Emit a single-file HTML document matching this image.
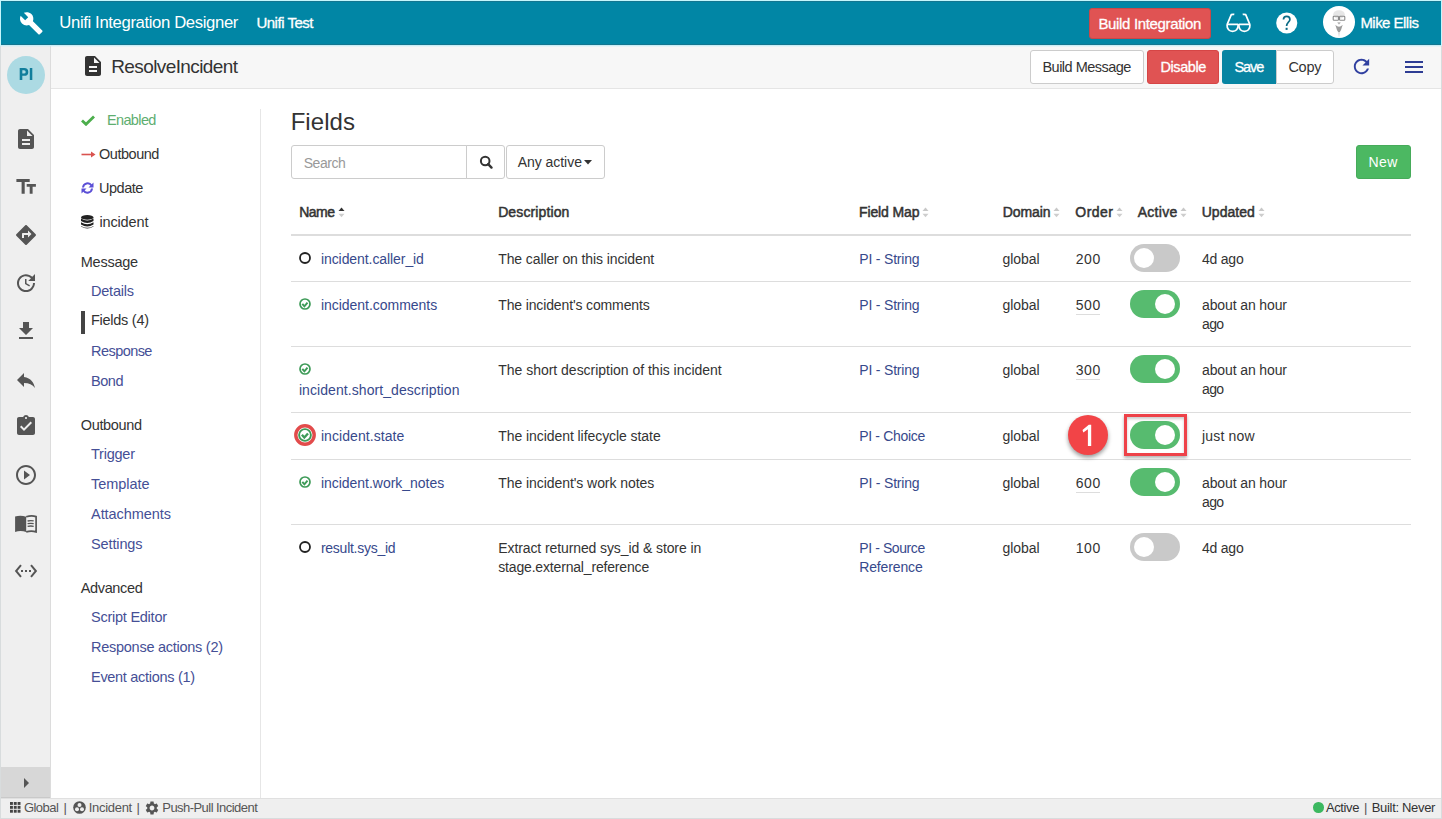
<!DOCTYPE html>
<html><head><meta charset="utf-8"><title>Unifi Integration Designer</title>
<style>*{box-sizing:border-box;margin:0;padding:0}
html,body{width:1442px;height:819px;overflow:hidden;background:#fff}
body{font-family:"Liberation Sans",sans-serif;color:#333;position:relative}
.abs{position:absolute}
.t{position:absolute;white-space:nowrap;line-height:1}
.btn{background:#fff;border:1px solid #ccc;border-radius:3px}
.tog{width:50px;height:28px;border-radius:14px;background:#c9c9c9}
.tog i{position:absolute;left:4px;top:4px;width:20px;height:20px;border-radius:50%;background:#fff}
.tog.on{background:#57bb6f}
.tog.on i{left:25px}
#frame{position:absolute;left:0;top:0;width:1442px;height:819px;border:1px solid #d8dcdd;pointer-events:none;z-index:50}
</style></head><body>
<div class="abs" style="left:1px;top:1px;width:1440px;height:44px;background:#0186a5;border-bottom:1px solid #137690"></div>
<div class="abs" style="left:1px;top:45px;width:50px;height:753px;background:#efefef;border-right:1px solid #dcdcdc"></div>
<div class="abs" style="left:51px;top:45px;width:1390px;height:44px;background:#f7f7f7;border-bottom:1px solid #e5e5e5"></div>
<div class="abs" style="left:260px;top:109px;width:1px;height:689px;background:#e6e6e6"></div>
<div class="abs" style="left:1px;top:798px;width:1440px;height:20px;background:#efefef;border-top:1px solid #e0e0e0"></div>
<div class="abs" style="left:1px;top:45px;width:1440px;height:1px;background:#c9eef6"></div>
<div class="abs" style="left:1px;top:46px;width:1440px;height:1px;background:rgba(200,235,245,.35)"></div>
<svg class="abs" style="left:18.6px;top:10.7px;" width="24.6" height="24.6" viewBox="0 0 24 24"><path fill="#fff" d="M22.7 19l-9.1-9.1c.9-2.3.4-5-1.5-6.9-2-2-5-2.4-7.4-1.3L9 6 6 9 1.6 4.7C.4 7.1.9 10.1 2.9 12.1c1.9 1.9 4.6 2.4 6.9 1.5l9.1 9.1c.4.4 1 .4 1.4 0l2.3-2.3c.5-.4.5-1.1.1-1.4z"/></svg>
<svg class="abs" style="left:1225px;top:13px" width="27" height="21" viewBox="0 0 27 21"><g fill="none" stroke="#fff" stroke-width="1.7" stroke-linejoin="round"><path d="M2 11.3 H13.2 M13.8 11.3 H25"/><path d="M2 11.3 C1.8 16.5 4.5 18.3 7.6 18.3 C10.8 18.3 13.3 16.5 13.2 11.3"/><path d="M13.8 11.3 C13.7 16.5 16.2 18.3 19.4 18.3 C22.5 18.3 25.2 16.5 25 11.3"/><path d="M2.2 11.3 L6.3 1.6 Q7.5 1.1 9.3 1.4"/><path d="M24.8 11.3 L20.7 1.6 Q19.5 1.1 17.7 1.4"/></g></svg>
<svg class="abs" style="left:1272px;top:8px" width="30" height="30" viewBox="0 0 30 30"><circle cx="14.75" cy="15.05" r="10.55" fill="#fff"/><path d="M11.5 11.6 C11.5 9.4 12.9 8.4 14.7 8.4 C16.6 8.4 17.9 9.6 17.9 11.4 C17.9 13.9 14.7 14.3 14.6 18" fill="none" stroke="#0a6a85" stroke-width="1.7"/><rect x="13.6" y="19.8" width="2" height="2.1" fill="#0a6a85"/></svg>
<div class="abs" style="left:1323px;top:6px;width:32px;height:32px;border-radius:50%;background:#fff;overflow:hidden"><svg width="32" height="32" viewBox="0 0 32 32"><ellipse cx="16" cy="8.5" rx="5.8" ry="4.2" fill="#e6e6e6"/><g fill="none" stroke="#8a8a8a" stroke-width="1.1"><rect x="10.2" y="10.3" width="5.3" height="3.9" rx="0.8"/><rect x="16.5" y="10.3" width="5.3" height="3.9" rx="0.8"/></g><path d="M14.3 16.3 H17.7 L16.6 18.2 H15.4z" fill="#b5b5b5"/><path d="M12.3 18.8 Q16 22.5 19.7 18.8 Q18.5 24 16 27.5 Q13.5 24 12.3 18.8z" fill="#9c9c9c"/><path d="M14.8 26 L17.2 26 L16 32z" fill="#e2e2e2"/></svg></div>
<svg class="abs" style="left:81px;top:54px;" width="24" height="24" viewBox="0 0 24 24"><path fill="#333" d="M14 2H6c-1.1 0-1.99.9-1.99 2L4 20c0 1.1.89 2 1.99 2H18c1.1 0 2-.9 2-2V8l-6-6zm2 16H8v-2h8v2zm0-4H8v-2h8v2zm-3-5V3.5L18.5 9H13z"/></svg>
<svg class="abs" style="left:1350.2px;top:54.8px;" width="23" height="23" viewBox="0 0 24 24"><path fill="#3040a0" d="M17.65 6.35C16.2 4.9 14.21 4 12 4c-4.42 0-7.99 3.58-7.99 8s3.57 8 7.99 8c3.73 0 6.84-2.55 7.73-6h-2.08c-.82 2.33-3.04 4-5.65 4-3.31 0-6-2.69-6-6s2.69-6 6-6c1.66 0 3.14.69 4.22 1.78L13 11h7V4l-2.35 2.35z"/></svg>
<div class="abs" style="left:1405px;top:61px;width:18px;height:2.2px;background:#2e3d94"></div><div class="abs" style="left:1405px;top:66px;width:18px;height:2.2px;background:#2e3d94"></div><div class="abs" style="left:1405px;top:71px;width:18px;height:2.2px;background:#2e3d94"></div>
<div class="abs btn" style="left:1030px;top:50px;width:114px;height:34px"></div>
<div class="abs" style="left:1147px;top:50px;width:72px;height:34px;background:#e05353;border-radius:3px;border:1px solid #d64545"></div>
<div class="abs" style="left:1222px;top:50px;width:54px;height:34px;background:#0784a2;border-radius:3px 0 0 3px"></div>
<div class="abs btn" style="left:1275.5px;top:50px;width:58.5px;height:34px;border-radius:0 3px 3px 0"></div>
<div class="abs" style="left:1089px;top:8px;width:122px;height:31px;background:#e05353;border-radius:3px;border:1px solid #c94848"></div>
<div class="abs" style="left:7px;top:55.5px;width:38px;height:38px;border-radius:50%;background:#acdae3"></div>
<svg class="abs" style="left:2px;top:50px" width="50" height="50" viewBox="0 0 50 50"><g fill="#127e9c"><path d="M17.7 18 H22.2 Q26.3 18 26.3 21.9 Q26.3 25.8 22.2 25.8 H20.3 V30 H17.7z M20.3 20.2 V23.6 H22 Q23.7 23.6 23.7 21.9 Q23.7 20.2 22 20.2z"/><rect x="27.8" y="18" width="2.5" height="12"/></g></svg>
<svg class="abs" style="left:12px;top:172px" width="30" height="28" viewBox="0 0 30 28"><path fill="#555" d="M4.4 7H17.7V9.9H12.7V21.8H9.6V9.9H4.4z M14.7 12H23.9V14.7H20.6V21.8H17.7V14.7H14.7z"/></svg>
<svg class="abs" style="left:14px;top:126.69999999999999px;" width="24" height="24" viewBox="0 0 24 24"><path fill="#555" d="M14 2H6c-1.1 0-1.99.9-1.99 2L4 20c0 1.1.89 2 1.99 2H18c1.1 0 2-.9 2-2V8l-6-6zm2 16H8v-2h8v2zm0-4H8v-2h8v2zm-3-5V3.5L18.5 9H13z"/></svg>
<svg class="abs" style="left:14px;top:223px;" width="24" height="24" viewBox="0 0 24 24"><path fill="#555" d="M21.71 11.29l-9-9c-.39-.39-1.02-.39-1.41 0l-9 9c-.39.39-.39 1.02 0 1.41l9 9c.39.39 1.02.39 1.41 0l9-9c.39-.38.39-1.01 0-1.41zM14 14.5V12h-4v3H8v-4c0-.55.45-1 1-1h5V7.5l3.5 3.5-3.5 3.5z"/></svg>
<svg class="abs" style="left:14px;top:270.6px;" width="24" height="24" viewBox="0 0 24 24"><path fill="#555" d="M21 10.12h-6.78l2.74-2.82c-2.73-2.7-7.150-2.8-9.880-.1-2.73 2.71-2.73 7.08 0 9.79s7.15 2.71 9.88 0C18.32 15.65 19 14.08 19 12.1h2c0 1.98-.88 4.55-2.64 6.29-3.51 3.48-9.21 3.48-12.72 0-3.5-3.47-3.53-9.11-.02-12.58s9.14-3.47 12.65 0L21 3v7.12zM12.5 8v4.25l3.5 2.08-.72 1.21L11 13V8h1.5z"/></svg>
<svg class="abs" style="left:14px;top:319px;" width="24" height="24" viewBox="0 0 24 24"><path fill="#555" d="M19 9h-4V3H9v6H5l7 7 7-7zM5 18v2h14v-2H5z"/></svg>
<svg class="abs" style="left:14px;top:367.5px;" width="24" height="24" viewBox="0 0 24 24"><path fill="#555" d="M10 9V5l-7 7 7 7v-4.1c5 0 8.5 1.6 11 5.1-1-5-4-10-11-11z"/></svg>
<svg class="abs" style="left:14px;top:414px;" width="24" height="24" viewBox="0 0 24 24"><path fill="#555" d="M19 3h-4.18C14.4 1.84 13.3 1 12 1c-1.3 0-2.4.84-2.82 2H5c-1.1 0-2 .9-2 2v14c0 1.1.9 2 2 2h14c1.1 0 2-.9 2-2V5c0-1.1-.9-2-2-2zm-7 0c.55 0 1 .45 1 1s-.45 1-1 1-1-.45-1-1 .45-1 1-1zm-2 14l-4-4 1.41-1.41L10 14.17l6.59-6.59L18 9l-8 8z"/></svg>
<svg class="abs" style="left:14px;top:463px;" width="24" height="24" viewBox="0 0 24 24"><path fill="#555" d="M10 16.5l6-4.5-6-4.5v9zM12 2C6.48 2 2 6.480 2 12s4.48 10 10 10 10-4.48 10-10S17.52 2 12 2zm0 18c-4.41 0-8-3.59-8-8s3.59-8 8-8 8 3.59 8 8-3.59 8-8 8z"/></svg>
<svg class="abs" style="left:14px;top:558.5px;" width="24" height="24" viewBox="0 0 24 24"><path fill="#555" d="M7.77 6.76L6.23 5.48.82 12l5.41 6.52 1.54-1.28L3.42 12l4.35-5.24zM7 13h2v-2H7v2zm10-2h-2v2h2v-2zm-6 2h2v-2h-2v2zm6.77-7.52l-1.54 1.28L20.58 12l-4.35 5.24 1.54 1.28L23.18 12l-5.41-6.52z"/></svg>
<svg class="abs" style="left:10px;top:505px" width="32" height="40" viewBox="0 0 32 40"><path fill="#555" d="M5.1 11.6 Q10.5 10 16.2 11.8 V26.9 Q10.5 25.2 5.1 26.9z"/><g fill="none" stroke="#555"><path stroke-width="1.7" d="M16.2 11.8 Q21.5 10 26.1 11.6 V26.9 Q21.5 25.2 16.2 26.9"/><path stroke-width="1.3" d="M17.6 16 Q20.5 15.3 23.7 15.9 M17.6 18.7 Q20.5 18 23.7 18.6 M17.6 21.4 Q20.5 20.7 23.7 21.3"/></g></svg>
<div class="abs" style="left:1px;top:767px;width:49px;height:31px;background:#d7d7d7;border-bottom:1px solid #c9c9c9"></div>
<svg class="abs" style="left:14px;top:770.5px;" width="24" height="24" viewBox="0 0 24 24"><path fill="#555" d="M10 17l5-5-5-5v10z"/></svg>
<svg class="abs" style="left:81px;top:115px" width="14" height="11" viewBox="0 0 14 11"><path d="M1 5.5 L5 9.3 L13 1.5" fill="none" stroke="#4cae4c" stroke-width="2.8"/></svg>
<svg class="abs" style="left:80.5px;top:150px" width="15" height="9" viewBox="0 0 15 9"><path d="M0.5 4.5 H11" stroke="#d9534f" stroke-width="1.6"/><path d="M10 1.5 L14.5 4.5 L10 7.5z" fill="#d9534f"/></svg>
<svg class="abs" style="left:80.5px;top:182px" width="13" height="12" viewBox="0 0 13 12"><g fill="none" stroke="#5b4fd6" stroke-width="2"><path d="M2 5.5 A4.6 4.6 0 0 1 10.5 3.5"/><path d="M11 6.5 A4.6 4.6 0 0 1 2.5 8.5"/></g><path d="M12.5 0.5 V5.5 H7.5z" fill="#5b4fd6"/><path d="M0.5 11.5 V6.5 H5.5z" fill="#5b4fd6"/></svg>
<svg class="abs" style="left:81px;top:215px" width="12.5" height="14" viewBox="0 0 12.5 14"><g fill="#222"><ellipse cx="6.25" cy="2.4" rx="6.2" ry="2.3"/><path d="M0 3.6 Q6.25 7.5 12.5 3.6 V6 Q6.25 9.8 0 6z"/><path d="M0 7.3 Q6.25 11.2 12.5 7.3 V9.6 Q6.25 13.4 0 9.6z"/><path d="M0 10.9 Q6.25 14.8 12.5 10.9 V11.6 Q6.25 15.5 0 11.6z"/></g></svg>
<div class="abs" style="left:81px;top:310.5px;width:3.5px;height:23px;background:#444"></div>
<div class="abs" style="left:291px;top:145px;width:176px;height:34px;border:1px solid #ccc;border-radius:3px 0 0 3px"></div>
<div class="abs" style="left:466px;top:145px;width:39px;height:34px;border:1px solid #ccc;border-radius:0 3px 3px 0"></div>
<svg class="abs" style="left:478.5px;top:155px" width="14" height="15" viewBox="0 0 14 15"><circle cx="6.2" cy="6" r="4.3" fill="none" stroke="#333" stroke-width="2"/><path d="M9.2 9.1 L12.5 12.6" stroke="#333" stroke-width="2.4" stroke-linecap="round"/></svg>
<div class="abs" style="left:505.5px;top:145px;width:99.5px;height:34px;border:1px solid #ccc;border-radius:3px"></div>
<svg class="abs" style="left:584px;top:160px" width="8" height="5" viewBox="0 0 8 5"><path d="M0 0 H8 L4 4.5z" fill="#333"/></svg>
<div class="abs" style="left:1356px;top:145px;width:55px;height:34px;background:#4cb862;border-radius:3px;border:1px solid #46ab5a"></div>
<div class="abs" style="left:291px;top:234px;width:1120px;height:2px;background:#ddd"></div>
<svg class="abs" style="left:337.5px;top:206px" width="7" height="12" viewBox="0 0 7 12"><path d="M0.5 5 L3.5 1.5 L6.5 5z" fill="#333"/><path d="M0.5 7.8 L3.5 11.3 L6.5 7.8z" fill="#cdcdcd"/></svg>
<svg class="abs" style="left:922px;top:206px" width="7" height="12" viewBox="0 0 7 12"><path d="M0.5 5 L3.5 1.5 L6.5 5z" fill="#c8c8c8"/><path d="M0.5 7.8 L3.5 11.3 L6.5 7.8z" fill="#cdcdcd"/></svg>
<svg class="abs" style="left:1053px;top:206px" width="7" height="12" viewBox="0 0 7 12"><path d="M0.5 5 L3.5 1.5 L6.5 5z" fill="#c8c8c8"/><path d="M0.5 7.8 L3.5 11.3 L6.5 7.8z" fill="#cdcdcd"/></svg>
<svg class="abs" style="left:1115.5px;top:206px" width="7" height="12" viewBox="0 0 7 12"><path d="M0.5 5 L3.5 1.5 L6.5 5z" fill="#c8c8c8"/><path d="M0.5 7.8 L3.5 11.3 L6.5 7.8z" fill="#cdcdcd"/></svg>
<svg class="abs" style="left:1179.5px;top:206px" width="7" height="12" viewBox="0 0 7 12"><path d="M0.5 5 L3.5 1.5 L6.5 5z" fill="#c8c8c8"/><path d="M0.5 7.8 L3.5 11.3 L6.5 7.8z" fill="#cdcdcd"/></svg>
<svg class="abs" style="left:1257.5px;top:206px" width="7" height="12" viewBox="0 0 7 12"><path d="M0.5 5 L3.5 1.5 L6.5 5z" fill="#c8c8c8"/><path d="M0.5 7.8 L3.5 11.3 L6.5 7.8z" fill="#cdcdcd"/></svg>
<svg class="abs" style="left:9.5px;top:802px" width="12" height="12" viewBox="0 0 12 12"><g fill="#444"><rect x="0.0" y="0.0" width="2.9" height="2.9"/><rect x="0.0" y="3.9" width="2.9" height="2.9"/><rect x="0.0" y="7.8" width="2.9" height="2.9"/><rect x="3.8" y="0.0" width="2.9" height="2.9"/><rect x="3.8" y="3.9" width="2.9" height="2.9"/><rect x="3.8" y="7.8" width="2.9" height="2.9"/><rect x="7.6" y="0.0" width="2.9" height="2.9"/><rect x="7.6" y="3.9" width="2.9" height="2.9"/><rect x="7.6" y="7.8" width="2.9" height="2.9"/></g></svg>
<svg class="abs" style="left:72.5px;top:800.5px" width="13" height="13" viewBox="0 0 13 13"><circle cx="6.5" cy="6.5" r="6.3" fill="#555"/><circle cx="6.5" cy="4" r="2" fill="#efefef"/><circle cx="4" cy="8.3" r="2" fill="#efefef"/><circle cx="9" cy="8.3" r="2" fill="#efefef"/></svg>
<svg class="abs" style="left:144.3px;top:799.5px" width="16" height="16" viewBox="0 0 24 24"><path fill="#555" d="M19.14 12.94c.04-.3.06-.61.06-.94 0-.32-.02-.64-.07-.94l2.03-1.58c.18-.14.23-.41.12-.61l-1.92-3.32c-.12-.22-.37-.29-.59-.22l-2.39.96c-.5-.38-1.03-.7-1.62-.94l-.36-2.54c-.04-.24-.24-.41-.48-.41h-3.84c-.24 0-.43.17-.47.41l-.36 2.54c-.59.24-1.13.57-1.62.94l-2.39-.96c-.22-.08-.47 0-.59.22L2.74 8.87c-.12.21-.08.47.12.61l2.03 1.58c-.05.3-.09.63-.09.94s.02.64.07.94l-2.030 1.58c-.18.14-.23.41-.12.61l1.92 3.32c.12.22.37.29.59.22l2.39-.96c.5.38 1.03.7 1.62.94l.36 2.54c.05.24.24.41.48.41h3.84c.24 0 .44-.17.47-.41l.36-2.54c.59-.24 1.13-.56 1.62-.94l2.39.96c.22.08.47 0 .59-.22l1.92-3.32c.12-.22.07-.47-.12-.61l-2.01-1.58zM12 15.6c-1.98 0-3.6-1.62-3.6-3.6s1.62-3.6 3.6-3.6 3.6 1.62 3.6 3.6-1.62 3.6-3.6 3.6z"/></svg>
<div class="abs" style="left:1313px;top:802px;width:10.5px;height:10.5px;border-radius:50%;background:#3cb860"></div>

<div class="t" style="left:59.33px;top:15.16px;font-size:16.7px;color:#fff;letter-spacing:-0.371px;">Unifi Integration Designer</div>
<div class="t" style="left:256.40px;top:15.30px;font-size:15px;color:#fff;letter-spacing:-0.485px;-webkit-text-stroke:0.3px #fff;">Unifi Test</div>
<div class="t" style="left:1098.40px;top:15.80px;font-size:15px;color:#fff;letter-spacing:-0.335px;-webkit-text-stroke:0.3px #fff;">Build Integration</div>
<div class="t" style="left:1360.40px;top:14.80px;font-size:15px;color:#fff;letter-spacing:-0.532px;-webkit-text-stroke:0.3px #fff;">Mike Ellis</div>
<div class="t" style="left:111.24px;top:57.11px;font-size:19px;color:#333;letter-spacing:-0.604px;">ResolveIncident</div>
<div class="t" style="left:1042.42px;top:60.22px;font-size:14.5px;color:#333;letter-spacing:-0.508px;">Build Message</div>
<div class="t" style="left:1160.42px;top:60.22px;font-size:14.5px;color:#fff;letter-spacing:-0.391px;-webkit-text-stroke:0.3px #fff;">Disable</div>
<div class="t" style="left:1234.42px;top:60.22px;font-size:14.5px;color:#fff;letter-spacing:-1.012px;-webkit-text-stroke:0.3px #fff;">Save</div>
<div class="t" style="left:1288.42px;top:60.22px;font-size:14.5px;color:#333;letter-spacing:-0.279px;">Copy</div>
<div class="t" style="left:106.92px;top:112.52px;font-size:14.5px;color:#5eae70;letter-spacing:-0.617px;">Enabled</div>
<div class="t" style="left:99.02px;top:146.72px;font-size:14.5px;color:#333;letter-spacing:-0.468px;">Outbound</div>
<div class="t" style="left:99.02px;top:180.72px;font-size:14.5px;color:#333;letter-spacing:-0.469px;">Update</div>
<div class="t" style="left:99.42px;top:214.72px;font-size:14.5px;color:#333;letter-spacing:-0.138px;">incident</div>
<div class="t" style="left:80.72px;top:254.72px;font-size:14.5px;color:#333;letter-spacing:-0.237px;">Message</div>
<div class="t" style="left:91.02px;top:283.72px;font-size:14.5px;color:#454f96;letter-spacing:-0.218px;">Details</div>
<div class="t" style="left:91.02px;top:313.22px;font-size:14.5px;color:#333;letter-spacing:-0.268px;">Fields (4)</div>
<div class="t" style="left:91.02px;top:343.72px;font-size:14.5px;color:#454f96;letter-spacing:-0.554px;">Response</div>
<div class="t" style="left:91.02px;top:373.72px;font-size:14.5px;color:#454f96;letter-spacing:-0.450px;">Bond</div>
<div class="t" style="left:80.72px;top:417.72px;font-size:14.5px;color:#333;letter-spacing:-0.326px;">Outbound</div>
<div class="t" style="left:91.02px;top:447.22px;font-size:14.5px;color:#454f96;letter-spacing:-0.230px;">Trigger</div>
<div class="t" style="left:91.02px;top:477.22px;font-size:14.5px;color:#454f96;letter-spacing:-0.046px;">Template</div>
<div class="t" style="left:91.02px;top:506.72px;font-size:14.5px;color:#454f96;letter-spacing:-0.058px;">Attachments</div>
<div class="t" style="left:91.02px;top:536.72px;font-size:14.5px;color:#454f96;letter-spacing:-0.126px;">Settings</div>
<div class="t" style="left:80.72px;top:580.72px;font-size:14.5px;color:#333;letter-spacing:-0.354px;">Advanced</div>
<div class="t" style="left:91.02px;top:610.22px;font-size:14.5px;color:#454f96;letter-spacing:-0.247px;">Script Editor</div>
<div class="t" style="left:91.02px;top:639.72px;font-size:14.5px;color:#454f96;letter-spacing:-0.263px;">Response actions (2)</div>
<div class="t" style="left:91.02px;top:669.72px;font-size:14.5px;color:#454f96;letter-spacing:-0.299px;">Event actions (1)</div>
<div class="t" style="left:290.64px;top:109.68px;font-size:24px;color:#333;letter-spacing:0.072px;">Fields</div>
<div class="t" style="left:303.64px;top:156.15px;font-size:14px;color:#999;letter-spacing:-0.416px;">Search</div>
<div class="t" style="left:517.74px;top:154.85px;font-size:14px;color:#333;letter-spacing:-0.045px;">Any active</div>
<div class="t" style="left:1368.44px;top:155.15px;font-size:14px;color:#fff;letter-spacing:0.486px;">New</div>
<div class="t" style="left:299.14px;top:205.15px;font-size:14px;color:#333;letter-spacing:-0.489px;-webkit-text-stroke:0.5px #333;">Name</div>
<div class="t" style="left:498.14px;top:205.15px;font-size:14px;color:#333;letter-spacing:0.125px;-webkit-text-stroke:0.5px #333;">Description</div>
<div class="t" style="left:858.94px;top:205.15px;font-size:14px;color:#333;letter-spacing:-0.111px;-webkit-text-stroke:0.5px #333;">Field Map</div>
<div class="t" style="left:1002.64px;top:205.15px;font-size:14px;color:#333;letter-spacing:-0.053px;-webkit-text-stroke:0.5px #333;">Domain</div>
<div class="t" style="left:1075.34px;top:205.15px;font-size:14px;color:#333;letter-spacing:0.448px;-webkit-text-stroke:0.5px #333;">Order</div>
<div class="t" style="left:1137.64px;top:205.15px;font-size:14px;color:#333;letter-spacing:0.291px;-webkit-text-stroke:0.5px #333;">Active</div>
<div class="t" style="left:1201.64px;top:205.15px;font-size:14px;color:#333;letter-spacing:0.058px;-webkit-text-stroke:0.5px #333;">Updated</div>
<div class="t" style="left:320.94px;top:252.15px;font-size:14px;color:#37498c;letter-spacing:-0.077px;">incident.caller_id</div>
<div class="t" style="left:498.24px;top:252.15px;font-size:14px;color:#333;letter-spacing:-0.107px;">The caller on this incident</div>
<div class="t" style="left:859.24px;top:252.15px;font-size:14px;color:#37498c;letter-spacing:-0.186px;">PI - String</div>
<div class="t" style="left:1002.44px;top:252.15px;font-size:14px;color:#333;letter-spacing:-0.017px;">global</div>
<div class="t" style="left:1075.64px;top:252.15px;font-size:14px;color:#333;letter-spacing:0.610px;">200</div>
<div class="t" style="left:1202.04px;top:252.15px;font-size:14px;color:#333;letter-spacing:-0.228px;">4d ago</div>
<div class="abs tog" style="left:1130px;top:244px"><i></i></div>
<div class="abs" style="left:291px;top:281.0px;width:1120px;height:1px;background:#ddd"></div>
<svg class="abs" style="left:299px;top:251.8px" width="12" height="12" viewBox="0 0 12 12"><circle cx="6" cy="6" r="5" fill="none" stroke="#222" stroke-width="1.8"/></svg>
<div class="t" style="left:320.94px;top:298.15px;font-size:14px;color:#37498c;letter-spacing:-0.027px;">incident.comments</div>
<div class="t" style="left:498.24px;top:298.15px;font-size:14px;color:#333;letter-spacing:-0.133px;">The incident's comments</div>
<div class="t" style="left:859.24px;top:298.15px;font-size:14px;color:#37498c;letter-spacing:-0.186px;">PI - String</div>
<div class="t" style="left:1002.44px;top:298.15px;font-size:14px;color:#333;letter-spacing:-0.017px;">global</div>
<div class="t" style="left:1075.64px;top:298.15px;font-size:14px;color:#333;letter-spacing:0.610px;">500</div>
<div class="abs" style="left:1076px;top:314px;width:24px;height:1px;background:#ddd"></div>
<div class="t" style="left:1202.04px;top:298.15px;font-size:14px;color:#333;letter-spacing:-0.119px;">about an hour</div>
<div class="t" style="left:1202.04px;top:317.15px;font-size:14px;color:#333;letter-spacing:-0.690px;">ago</div>
<div class="abs tog on" style="left:1130px;top:290px"><i></i></div>
<div class="abs" style="left:291px;top:346.0px;width:1120px;height:1px;background:#ddd"></div>
<svg class="abs" style="left:299px;top:297.8px" width="12" height="12" viewBox="0 0 12 12"><circle cx="6" cy="6" r="5" fill="none" stroke="#3e9b58" stroke-width="1.7"/><path d="M3.3 5.9 L5.4 8.3 L8.5 4.7" fill="none" stroke="#3e9b58" stroke-width="2"/></svg>
<div class="t" style="left:298.94px;top:383.15px;font-size:14px;color:#37498c;letter-spacing:0.069px;">incident.short_description</div>
<div class="t" style="left:498.24px;top:363.15px;font-size:14px;color:#333;letter-spacing:-0.017px;">The short description of this incident</div>
<div class="t" style="left:859.24px;top:363.15px;font-size:14px;color:#37498c;letter-spacing:-0.186px;">PI - String</div>
<div class="t" style="left:1002.44px;top:363.15px;font-size:14px;color:#333;letter-spacing:-0.017px;">global</div>
<div class="t" style="left:1075.64px;top:363.15px;font-size:14px;color:#333;letter-spacing:0.610px;">300</div>
<div class="abs" style="left:1076px;top:379px;width:24px;height:1px;background:#ddd"></div>
<div class="t" style="left:1202.04px;top:363.15px;font-size:14px;color:#333;letter-spacing:-0.119px;">about an hour</div>
<div class="t" style="left:1202.04px;top:382.15px;font-size:14px;color:#333;letter-spacing:-0.690px;">ago</div>
<div class="abs tog on" style="left:1130px;top:355px"><i></i></div>
<div class="abs" style="left:291px;top:412.0px;width:1120px;height:1px;background:#ddd"></div>
<svg class="abs" style="left:299px;top:362.8px" width="12" height="12" viewBox="0 0 12 12"><circle cx="6" cy="6" r="5" fill="none" stroke="#3e9b58" stroke-width="1.7"/><path d="M3.3 5.9 L5.4 8.3 L8.5 4.7" fill="none" stroke="#3e9b58" stroke-width="2"/></svg>
<div class="t" style="left:320.94px;top:429.15px;font-size:14px;color:#37498c;letter-spacing:0.068px;">incident.state</div>
<div class="t" style="left:498.24px;top:429.15px;font-size:14px;color:#333;letter-spacing:-0.064px;">The incident lifecycle state</div>
<div class="t" style="left:859.24px;top:429.15px;font-size:14px;color:#37498c;letter-spacing:-0.327px;">PI - Choice</div>
<div class="t" style="left:1002.44px;top:429.15px;font-size:14px;color:#333;letter-spacing:-0.017px;">global</div>
<div class="t" style="left:1202.04px;top:429.15px;font-size:14px;color:#333;letter-spacing:0.160px;">just now</div>
<div class="abs tog on" style="left:1130px;top:421px"><i></i></div>
<div class="abs" style="left:291px;top:459.0px;width:1120px;height:1px;background:#ddd"></div>
<svg class="abs" style="left:293px;top:422.8px" width="24" height="24" viewBox="0 0 24 24"><circle cx="12" cy="12" r="9.2" fill="#fff" stroke="#e24b4b" stroke-width="3.4"/><circle cx="12" cy="12" r="5.9" fill="none" stroke="#3e9b58" stroke-width="1.9"/><path d="M8.9 11.8 L11.3 14.6 L15 10.4" fill="none" stroke="#3e9b58" stroke-width="2.3"/></svg>
<div class="t" style="left:320.94px;top:476.15px;font-size:14px;color:#37498c;letter-spacing:-0.026px;">incident.work_notes</div>
<div class="t" style="left:498.24px;top:476.15px;font-size:14px;color:#333;letter-spacing:-0.065px;">The incident's work notes</div>
<div class="t" style="left:859.24px;top:476.15px;font-size:14px;color:#37498c;letter-spacing:-0.186px;">PI - String</div>
<div class="t" style="left:1002.44px;top:476.15px;font-size:14px;color:#333;letter-spacing:-0.017px;">global</div>
<div class="t" style="left:1075.64px;top:476.15px;font-size:14px;color:#333;letter-spacing:0.610px;">600</div>
<div class="abs" style="left:1076px;top:492px;width:24px;height:1px;background:#ddd"></div>
<div class="t" style="left:1202.04px;top:476.15px;font-size:14px;color:#333;letter-spacing:-0.119px;">about an hour</div>
<div class="t" style="left:1202.04px;top:495.15px;font-size:14px;color:#333;letter-spacing:-0.690px;">ago</div>
<div class="abs tog on" style="left:1130px;top:468px"><i></i></div>
<div class="abs" style="left:291px;top:524.0px;width:1120px;height:1px;background:#ddd"></div>
<svg class="abs" style="left:299px;top:475.8px" width="12" height="12" viewBox="0 0 12 12"><circle cx="6" cy="6" r="5" fill="none" stroke="#3e9b58" stroke-width="1.7"/><path d="M3.3 5.9 L5.4 8.3 L8.5 4.7" fill="none" stroke="#3e9b58" stroke-width="2"/></svg>
<div class="t" style="left:320.94px;top:541.15px;font-size:14px;color:#37498c;letter-spacing:-0.261px;">result.sys_id</div>
<div class="t" style="left:498.24px;top:541.15px;font-size:14px;color:#333;letter-spacing:-0.098px;">Extract returned sys_id &amp; store in</div>
<div class="t" style="left:859.24px;top:541.15px;font-size:14px;color:#37498c;letter-spacing:-0.405px;">PI - Source</div>
<div class="t" style="left:1002.44px;top:541.15px;font-size:14px;color:#333;letter-spacing:-0.017px;">global</div>
<div class="t" style="left:1075.64px;top:541.15px;font-size:14px;color:#333;letter-spacing:0.610px;">100</div>
<div class="t" style="left:1202.04px;top:541.15px;font-size:14px;color:#333;letter-spacing:-0.228px;">4d ago</div>
<div class="abs tog" style="left:1130px;top:533px"><i></i></div>
<svg class="abs" style="left:299px;top:540.8px" width="12" height="12" viewBox="0 0 12 12"><circle cx="6" cy="6" r="5" fill="none" stroke="#222" stroke-width="1.8"/></svg>
<div class="t" style="left:498.24px;top:560.15px;font-size:14px;color:#333;letter-spacing:-0.170px;">stage.external_reference</div>
<div class="t" style="left:859.24px;top:560.15px;font-size:14px;color:#37498c;letter-spacing:-0.139px;">Reference</div>
<div class="abs" style="left:1068px;top:415px;width:40px;height:40px;border-radius:50%;background:#f24447;box-shadow:0 2.5px 4px rgba(0,0,0,.4)"></div>
<svg class="abs" style="left:1068px;top:415px" width="40" height="40" viewBox="0 0 40 40"><path fill="#fff" d="M23.2 9.8 V31.1 H19.9 V14.3 L15.3 17.5 L14.5 15.1 L20.8 9.8z"/></svg>
<div class="abs" style="left:1124px;top:414px;width:63px;height:42px;border:3px solid #ee4249;box-shadow:0 2px 3px rgba(0,0,0,.3), inset 0 2px 3px rgba(0,0,0,.2)"></div>

<div class="t" style="left:23.88px;top:800.99px;font-size:13px;color:#555;letter-spacing:-0.534px;">Global</div>
<div class="t" style="left:63.48px;top:800.99px;font-size:13px;color:#555;">|</div>
<div class="t" style="left:88.78px;top:800.99px;font-size:13px;color:#555;letter-spacing:-0.303px;">Incident</div>
<div class="t" style="left:136.48px;top:800.99px;font-size:13px;color:#555;">|</div>
<div class="t" style="left:162.28px;top:800.99px;font-size:13px;color:#555;letter-spacing:-0.546px;">Push-Pull Incident</div>
<div class="t" style="left:1325.98px;top:800.99px;font-size:13px;color:#333;letter-spacing:-0.398px;">Active</div>
<div class="t" style="left:1363.98px;top:800.99px;font-size:13px;color:#555;">|</div>
<div class="t" style="left:1371.78px;top:800.99px;font-size:13px;color:#333;letter-spacing:-0.326px;">Built: Never</div>

<div id="frame"></div>
<div class="abs" style="left:0;top:0;width:1442px;height:1px;background:#c4f6fc;z-index:51"></div>
<div class="abs" style="left:0;top:0;width:1px;height:46px;background:#c4f6fc;z-index:51"></div>
<div class="abs" style="left:1441px;top:0;width:1px;height:46px;background:#c4f6fc;z-index:51"></div>
<div class="abs" style="left:1px;top:1px;width:1440px;height:1px;background:#137690;z-index:51"></div>
</body></html>
